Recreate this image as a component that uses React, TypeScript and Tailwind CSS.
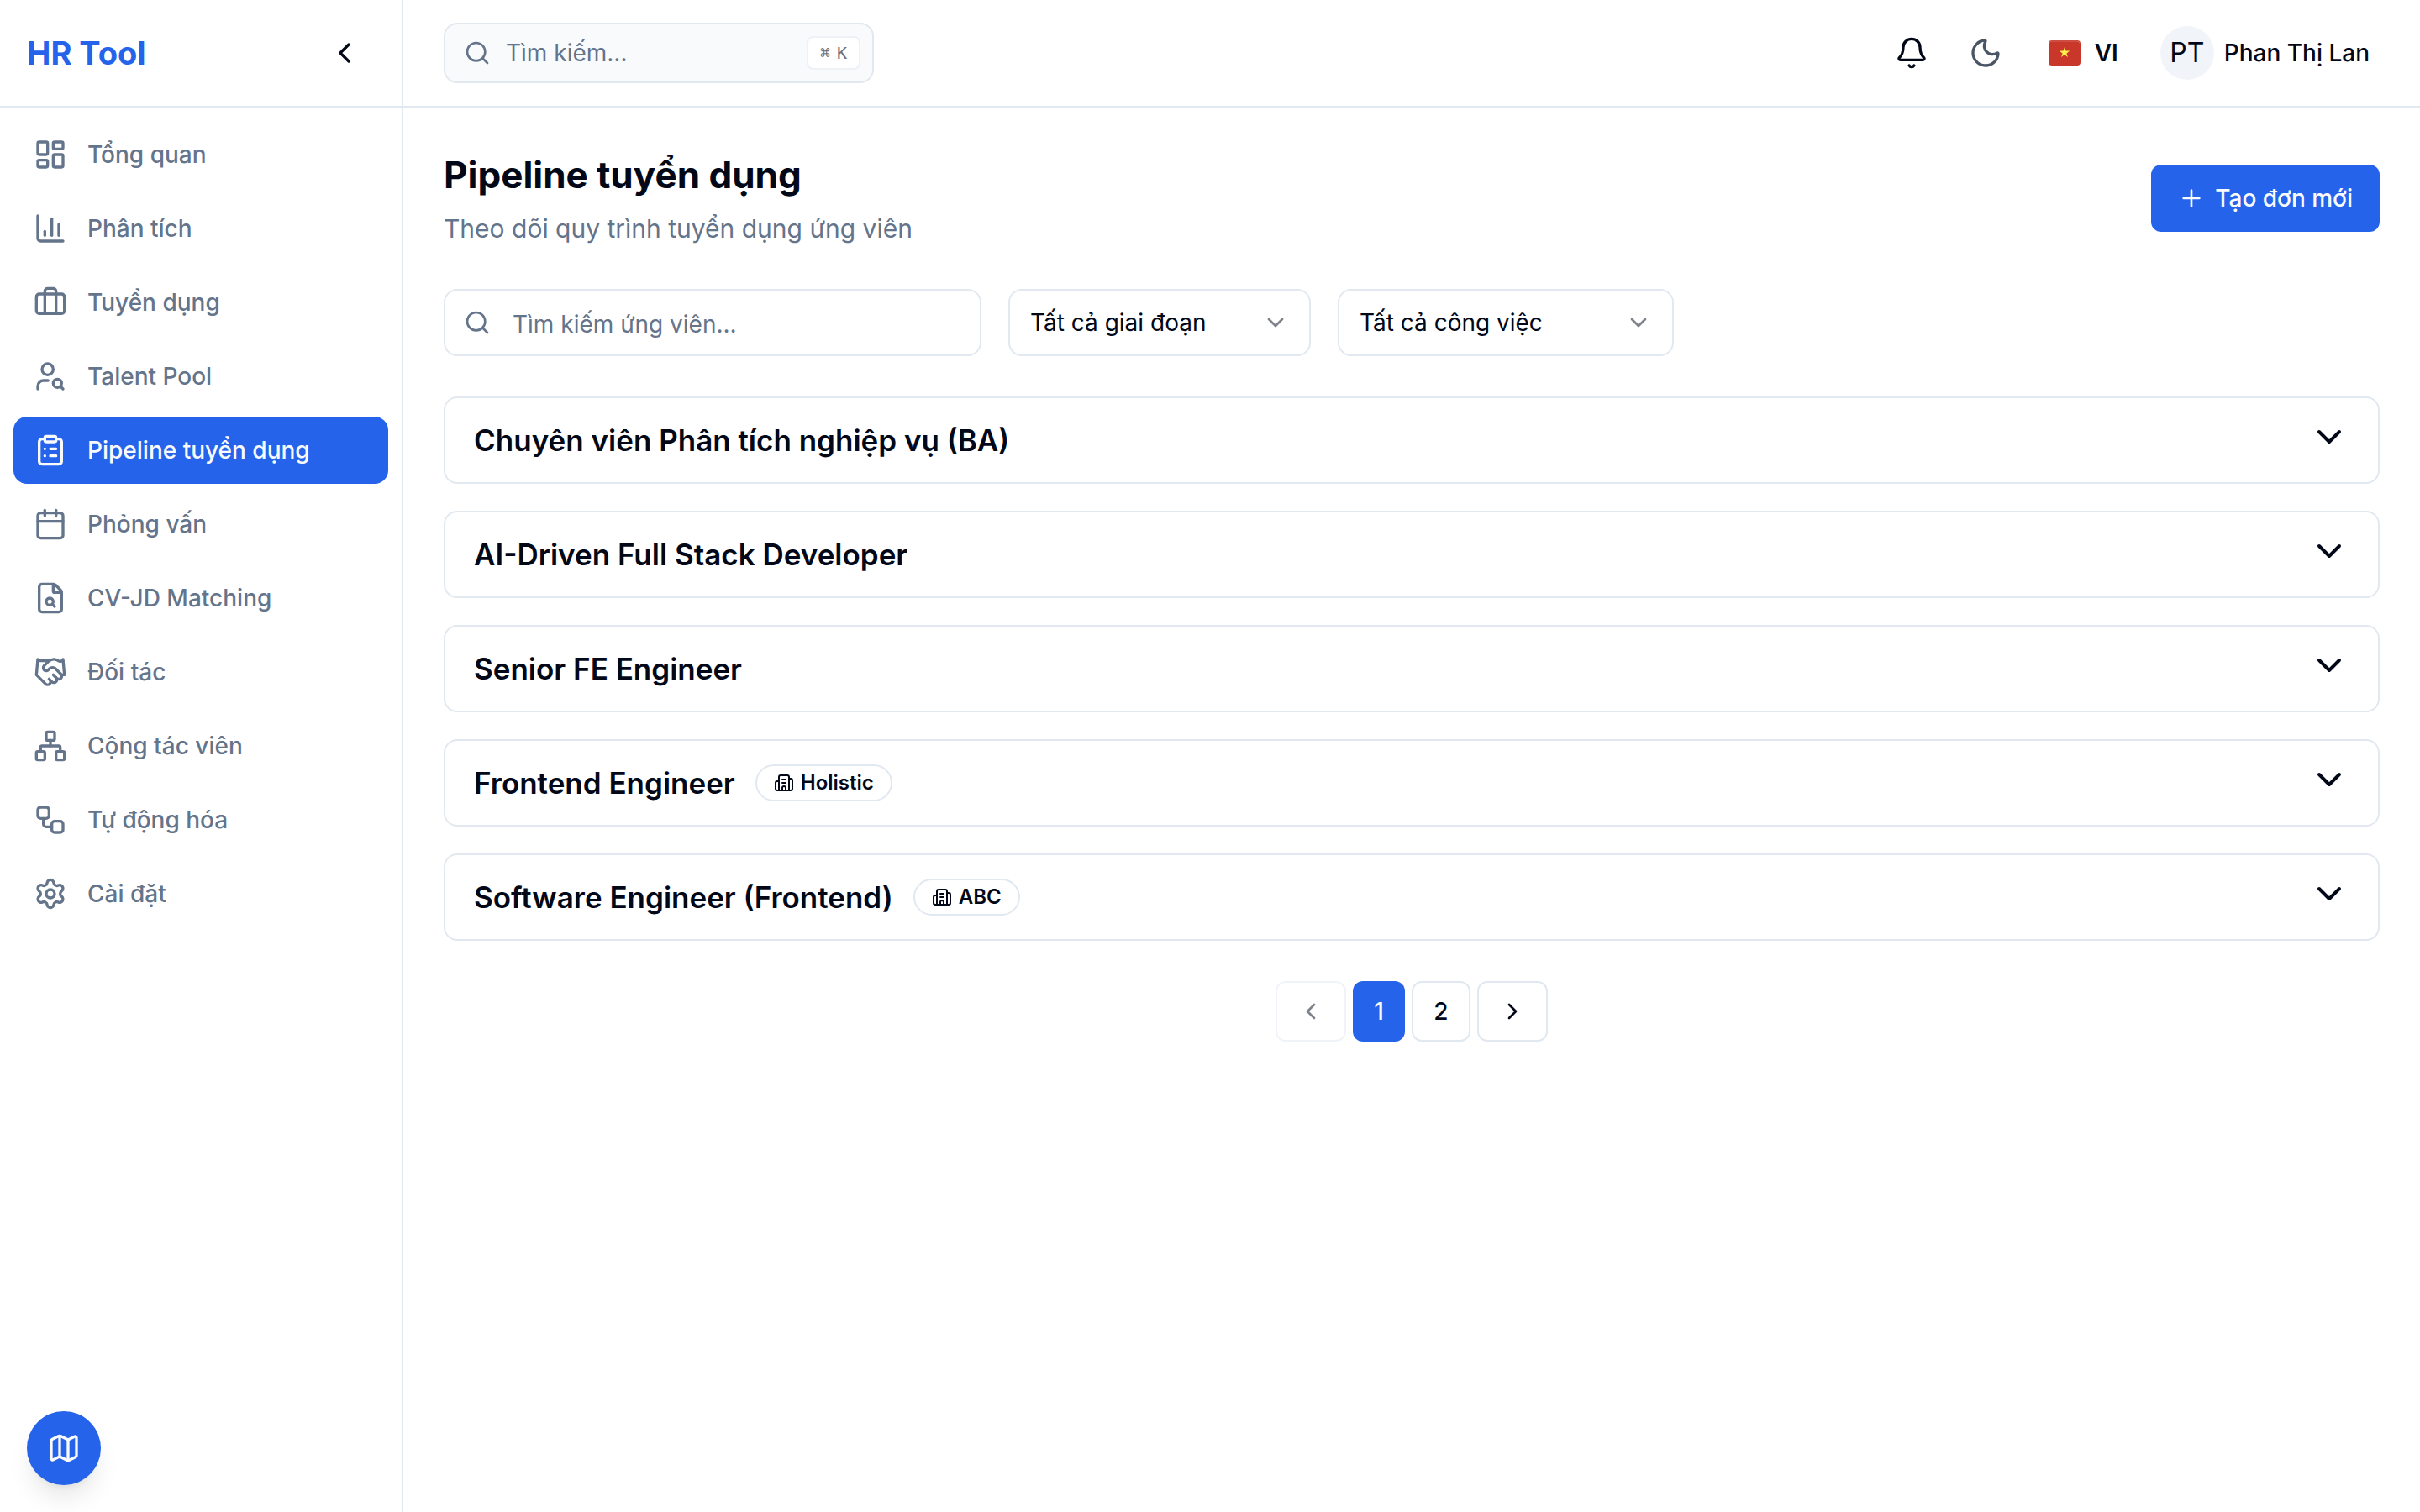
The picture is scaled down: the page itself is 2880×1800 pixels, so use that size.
import { useState } from 'react'
import {
  Bell,
  Briefcase,
  Building2,
  Calendar,
  ChartColumn,
  ChevronDown,
  ChevronLeft,
  ChevronRight,
  ClipboardList,
  FileSearch,
  Handshake,
  LayoutDashboard,
  Map as MapIcon,
  Moon,
  Network,
  Plus,
  Search,
  Settings,
  UserSearch,
  Workflow,
} from 'lucide-react'

const NAV_ITEMS = [
  { label: 'Tổng quan', icon: LayoutDashboard },
  { label: 'Phân tích', icon: ChartColumn },
  { label: 'Tuyển dụng', icon: Briefcase },
  { label: 'Talent Pool', icon: UserSearch },
  { label: 'Pipeline tuyển dụng', icon: ClipboardList },
  { label: 'Phỏng vấn', icon: Calendar },
  { label: 'CV-JD Matching', icon: FileSearch },
  { label: 'Đối tác', icon: Handshake },
  { label: 'Cộng tác viên', icon: Network },
  { label: 'Tự động hóa', icon: Workflow },
  { label: 'Cài đặt', icon: Settings },
]

const JOBS: { title: string; client?: string }[] = [
  { title: 'Chuyên viên Phân tích nghiệp vụ (BA)' },
  { title: 'AI-Driven Full Stack Developer' },
  { title: 'Senior FE Engineer' },
  { title: 'Frontend Engineer', client: 'Holistic' },
  { title: 'Software Engineer (Frontend)', client: 'ABC' },
]

const PAGES = [1, 2]

function Sidebar() {
  const [active, setActive] = useState('Pipeline tuyển dụng')

  return (
    <aside className="w-[480px] shrink-0 border-r-2 border-slate-200">
      <div className="flex h-32 items-center justify-between border-b-2 border-slate-200 px-8">
        <span className="text-[38px] leading-[56px] font-bold text-[#2563eb]">HR Tool</span>
        <button aria-label="Thu gọn" className="flex size-[72px] items-center justify-center rounded-xl">
          <ChevronLeft size={40} />
        </button>
      </div>
      <nav className="flex flex-col gap-2 p-4">
        {NAV_ITEMS.map(({ label, icon: Icon }) => (
          <a
            key={label}
            href="#"
            onClick={() => setActive(label)}
            className={`flex h-20 items-center gap-6 rounded-2xl px-6 text-[28px] leading-10 font-medium ${
              active === label ? 'bg-[#2563eb] text-slate-50' : 'text-[#64748b]'
            }`}
          >
            <Icon size={40} />
            {label}
          </a>
        ))}
      </nav>
    </aside>
  )
}

function Flag() {
  return (
    <svg width="40" height="32" viewBox="0 0 40 32" aria-hidden="true">
      <rect x="1" y="1" width="38" height="30" rx="4" fill="#c8372a" />
      <path d="M2 4.5Q2.5 2 5 2H35Q37.5 2 38 4.5" fill="none" stroke="#d5655b" strokeWidth="1" />
      <path d="M20 9l1.5 4.6h4.8l-3.9 2.8 1.5 4.6-3.9-2.9-3.9 2.9 1.5-4.6-3.9-2.8h4.8z" fill="#fff04d" />
    </svg>
  )
}

function Header() {
  return (
    <header className="flex h-32 items-center justify-between border-b-2 border-slate-200 px-12">
      <button className="flex h-[72px] w-[512px] items-center gap-[18px] rounded-2xl border-2 border-slate-200 bg-slate-50 pr-3.5 pl-[22px] text-[28px] leading-10 text-[#64748b]">
        <Search size={32} />
        <span>Tìm kiếm...</span>
        <kbd className="ml-auto flex h-10 items-center gap-2 rounded-lg border-2 border-slate-200/60 bg-white px-3.5 font-['DejaVu_Sans_Mono',monospace] text-[20px] leading-none text-[#6b6e78]">
          <span>⌘</span>
          <span>K</span>
        </kbd>
      </button>

      <div className="flex items-center gap-4">
        <button aria-label="Thông báo" className="flex size-[72px] items-center justify-center">
          <Bell size={40} />
        </button>
        <button aria-label="Giao diện tối" className="flex size-[72px] items-center justify-center text-gray-600">
          <Moon size={40} />
        </button>
        <button className="flex h-[72px] items-center gap-4 px-[22px] text-[28px] font-semibold">
          <Flag />
          VI
        </button>
        <button className="flex h-[72px] items-center gap-3 px-3 text-[28px] font-medium">
          <span className="flex size-16 items-center justify-center rounded-full bg-slate-100 text-[32px] leading-none font-normal">
            PT
          </span>
          Phan Thị Lan
        </button>
      </div>
    </header>
  )
}

function FilterSelect({ label, className }: { label: string; className: string }) {
  return (
    <div className={`relative ${className}`}>
      <select
        aria-label={label}
        className="h-20 w-full appearance-none rounded-2xl border-2 border-slate-200 bg-white px-6 text-[28px] leading-10"
      >
        <option>{label}</option>
      </select>
      <ChevronDown size={32} className="pointer-events-none absolute top-6 right-[26px] opacity-50" />
    </div>
  )
}

export default function App() {
  const [page, setPage] = useState(1)

  return (
    <div className="flex min-h-screen bg-white font-['Inter',sans-serif] text-[#020817]">
      <Sidebar />

      <div className="flex min-w-0 flex-1 flex-col">
        <Header />

        <main className="flex flex-col gap-12 p-12">
          {/* Title */}
          <div className="flex items-center justify-between">
            <div className="flex flex-col gap-2">
              <h1 className="text-[44px] leading-[64px] font-bold">Pipeline tuyển dụng</h1>
              <p className="text-[30px] leading-[48px] text-[#64748b]">Theo dõi quy trình tuyển dụng ứng viên</p>
            </div>
            <button className="flex h-20 items-center gap-3 rounded-xl bg-[#2563eb] px-8 text-[28px] font-medium text-slate-50">
              <Plus size={32} />
              Tạo đơn mới
            </button>
          </div>

          {/* Filters */}
          <div className="flex items-center gap-8">
            <div className="relative w-[640px]">
              <Search size={32} className="absolute top-6 left-6 text-[#64748b]" />
              <input
                type="text"
                aria-label="Tìm kiếm ứng viên"
                placeholder="Tìm kiếm ứng viên..."
                className="h-20 w-full rounded-2xl border-2 border-slate-200 pt-1 pr-6 pl-20 text-[28px] placeholder:text-[#64748b]"
              />
            </div>
            <FilterSelect label="Tất cả giai đoạn" className="w-[360px]" />
            <FilterSelect label="Tất cả công việc" className="w-[400px]" />
          </div>

          {/* Jobs */}
          <div className="flex flex-col gap-8">
            {JOBS.map(job => (
              <button
                key={job.title}
                className="flex items-start justify-between rounded-2xl border-2 border-slate-200 px-[34px] py-[22px] text-left"
              >
                <span className="flex items-center gap-6">
                  <span className="text-[35px] leading-[56px] font-semibold">{job.title}</span>
                  {job.client && (
                    <span className="flex h-11 items-center gap-2 rounded-full border-2 border-slate-200 px-5 text-[24px] leading-8 font-semibold">
                      <Building2 size={24} />
                      {job.client}
                    </span>
                  )}
                </span>
                <ChevronDown size={48} />
              </button>
            ))}
          </div>

          {/* Pagination */}
          <div className="flex items-center justify-center gap-2">
            <button
              aria-label="Trang trước"
              disabled={page === 1}
              onClick={() => setPage(page - 1)}
              className="flex h-[72px] items-center rounded-xl border-2 border-slate-200 px-6 disabled:opacity-50"
            >
              <ChevronLeft size={32} />
            </button>
            {PAGES.map(p => (
              <button
                key={p}
                onClick={() => setPage(p)}
                className={`h-[72px] rounded-xl text-[28px] font-medium ${
                  page === p ? 'min-w-[62px] bg-[#2563eb] text-slate-50' : 'min-w-[70px] border-2 border-slate-200'
                }`}
              >
                {p}
              </button>
            ))}
            <button
              aria-label="Trang sau"
              disabled={page === PAGES.length}
              onClick={() => setPage(page + 1)}
              className="flex h-[72px] items-center rounded-xl border-2 border-slate-200 px-6 disabled:opacity-50"
            >
              <ChevronRight size={32} />
            </button>
          </div>
        </main>
      </div>

      <button
        aria-label="Hướng dẫn"
        className="fixed bottom-8 left-8 flex size-[88px] items-center justify-center rounded-full bg-[#2563eb] text-slate-50 shadow-[0_20px_30px_-6px_rgb(0_0_0/0.1),0_8px_12px_-8px_rgb(0_0_0/0.1)]"
      >
        <MapIcon size={40} />
      </button>
    </div>
  )
}
